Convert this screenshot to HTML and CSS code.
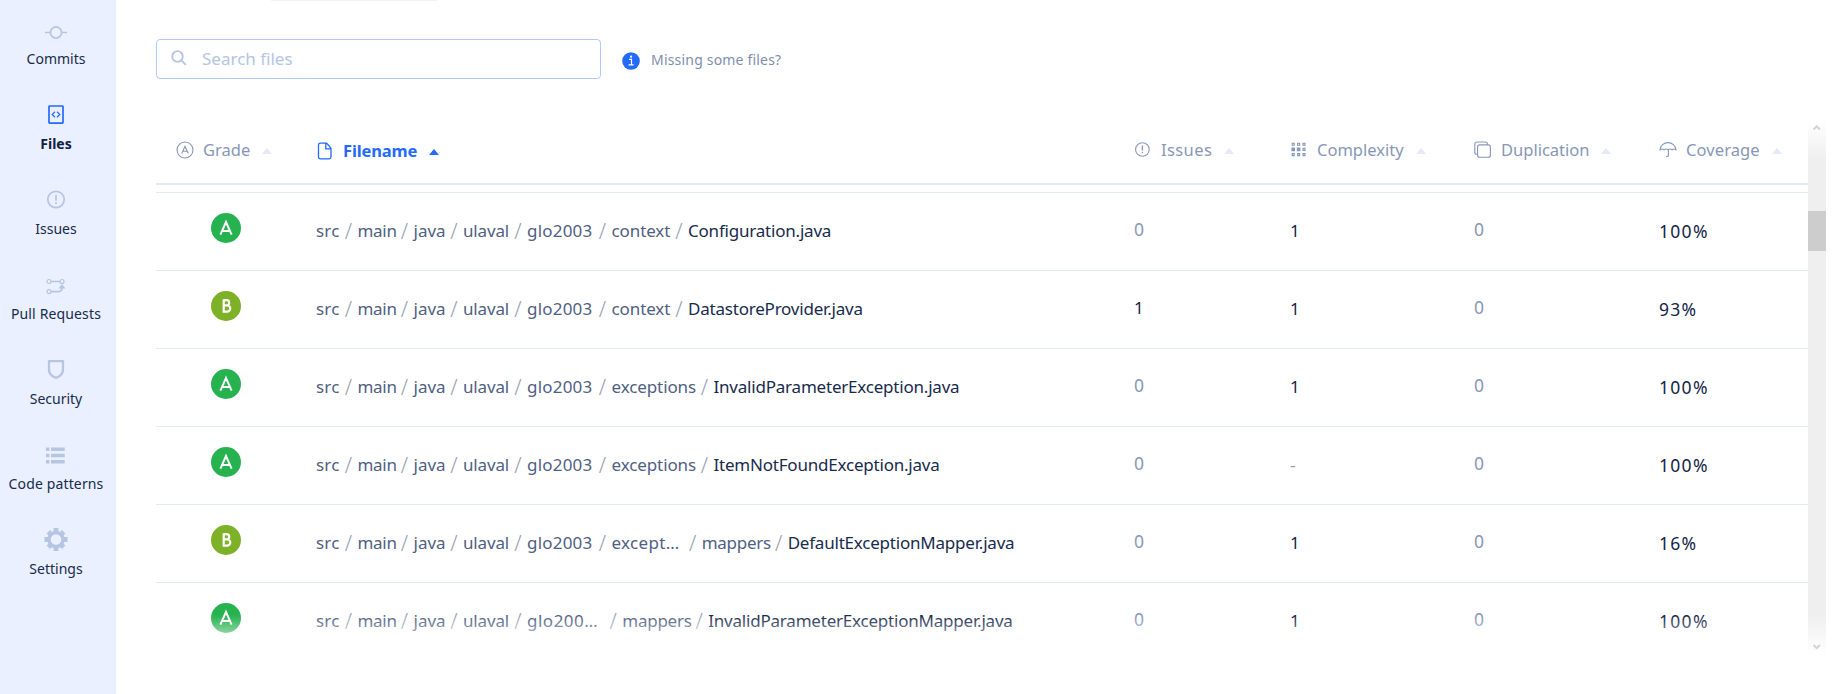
FILE: index.html
```html
<!DOCTYPE html>
<html lang="en">
<head>
<meta charset="utf-8">
<title>Files</title>
<link rel="stylesheet" href="styles.css">
</head>
<body>
<svg class="defs" aria-hidden="true">
  <symbol id="grade-a" viewBox="0 0 30 30"><circle cx="15" cy="15" r="15" fill="#26b24f"/><path d="M9.400 21.600 15 9l5.600 12.600M11.300 17.900h7.400" fill="none" stroke="#fff" stroke-width="2"/></symbol>
  <symbol id="grade-b" viewBox="0 0 30 30"><circle cx="15" cy="15" r="15" fill="#7db128"/><path d="M12.700 9.200h2.900a2.500 2.500 0 0 1 0 5.200h-2.900M12.700 14.400h3.400a3 3 0 0 1 0 6.300h-3.400zM12.700 8.200v13.500" fill="none" stroke="#fff" stroke-width="2.200"/></symbol>
</svg>
<div class="app">
  <nav class="sidebar">
    <a class="nav-item"><svg viewBox="0 0 32 32"><circle cx="16" cy="16.500" r="5.600"/><path d="M5 16.500h5.400M21.600 16.500H27"/></svg><span>Commits</span></a>
    <a class="nav-item active"><svg viewBox="0 0 32 32"><rect x="9" y="5" width="14" height="17.200" rx=".6"/><path d="m15 10.800-2.800 2.700 2.800 2.700M17 10.800l2.800 2.700-2.800 2.700" stroke-width="1.200"/></svg><span>Files</span></a>
    <a class="nav-item"><svg viewBox="0 0 32 32"><circle cx="16" cy="13.500" r="8.200"/><path d="M16 8.800v6M16 16.200v1.800"/></svg><span>Issues</span></a>
    <a class="nav-item wide"><svg viewBox="0 0 32 32"><path d="M11 10.500h9M11 20.600h7.500q3.500 0 3.500-3.500"/><g stroke-width="1.200"><circle cx="9" cy="10.500" r="2"/><circle cx="22" cy="10.500" r="2"/><circle cx="9" cy="20.600" r="2"/></g><path class="solid" d="m22 13 3.500 4.600h-7z"/></svg><span>Pull Requests</span></a>
    <a class="nav-item"><svg viewBox="0 0 32 32"><path d="M9 5.200h14v8.300c0 4-2.500 6.800-7 8.400-4.500-1.600-7-4.400-7-8.400z" stroke-width="2.300" stroke-linejoin="round"/></svg><span>Security</span></a>
    <a class="nav-item wide"><svg viewBox="0 0 32 32"><path class="solid" d="M6 6.500h3.400v3.600H6zM11 6.500h13.700v3.600H11zM6 12.700h3.400v3.600H6zM11 12.700h13.700v3.600H11zM6 18.900h3.400v3.600H6zM11 18.900h13.700v3.600H11z"/></svg><span>Code patterns</span></a>
    <a class="nav-item"><svg viewBox="0 0 32 32"><circle cx="16" cy="13.500" r="7" stroke-width="3.400"/><g stroke-width="4.800"><path d="M16 2v4.500M16 20.500V25M4.500 13.500H9M23 13.500h4.500M8.300 5.800l2.800 2.800M20.900 18.400l2.800 2.800M23.700 5.800l-2.800 2.800M11.100 18.400l-2.800 2.800"/></g></svg><span>Settings</span></a>
  </nav>
  <main class="content">
    <div class="tab-edge"></div>
    <div class="toolbar">
      <div class="search"><svg viewBox="0 0 16 16"><circle cx="6.500" cy="6.500" r="5.300"/><path d="m10.400 10.400 4.400 4.400"/></svg><span>Search files</span></div>
      <div class="missing"><svg viewBox="0 0 18 18"><circle cx="9" cy="9" r="8.800" fill="#246bfd"/><path d="M7 7.300h2.500v5.400M6.600 12.900h5" fill="none" stroke="#fff" stroke-width="1.200"/><circle cx="9.100" cy="4.700" r="1.100" fill="#fff"/></svg><span>Missing some files?</span></div>
    </div>
    <div class="panel">
      <div class="table">
        <div class="grid head">
          <div class="th th-grade"><svg viewBox="0 0 18 18"><circle cx="9" cy="9" r="8"/><path d="M5.700 12.600 9 5.400l3.300 7.200M6.900 10.300h4.200"/></svg><span>Grade</span><i class="sort"></i></div>
          <div class="th th-file"><svg viewBox="0 0 18 18"><path d="M10.600 1.200H4.200q-1.700 0-1.700 1.700v12.200q0 1.700 1.700 1.700h9.100q1.700 0 1.700-1.700V6.300zM9.800 1.200v5.700H15" stroke-width="1.300"/></svg><span>Filename</span><i class="sort"></i></div>
          <div class="th th-issues"><svg viewBox="0 0 18 18"><circle cx="8.400" cy="8.500" r="6.800"/><path d="M8.400 4.600v5M8.400 10.800v1.500" stroke-width="1.400"/></svg><span>Issues</span><i class="sort"></i></div>
          <div class="th th-complex"><svg viewBox="0 0 18 18"><path d="M2.200 2.200h2v2h-2zM7.600 2.200h2v2h-2zM13 2.200h2v2h-2zM2.200 12.600h2v2h-2zM7.600 12.600h2v2h-2zM13 7.400h2v2h-2zM13 12.600h2v2h-2z"/><path d="M2.200 7.400h2v2h-2zM7.600 7.400h2v2h-2z" fill="#8797ba" stroke-width="1.600"/></svg><span>Complexity</span><i class="sort"></i></div>
          <div class="th th-dup"><svg viewBox="0 0 18 18"><rect x="3.600" y="3.900" width="12.800" height="12.300" rx="2"/><path d="M3.600 13.200H2.800Q.8 13.200.8 11.200V3q0-2 2-2h8.600q2 0 2 2v.900"/></svg><span>Duplication</span><i class="sort"></i></div>
          <div class="th th-cov"><svg viewBox="0 0 18 18"><path d="M1 8.700C1.500 4.500 4.800 1.600 9 1.600s7.500 2.900 8 7.100q-2-1.500-4 0-2-1.500-4 0-2-1.500-4 0-2-1.500-4 0zM9.400 8.500v5.700q0 1.300-2.400 1.300"/></svg><span>Coverage</span><i class="sort"></i></div>
        </div>
        <div class="grid row">
          <svg class="badge"><use href="#grade-a"/></svg>
          <div class="path"><span class="src">src</span><b>/</b><span class="main">main</span><b>/</b><span class="java">java</span><b>/</b><span class="ulaval">ulaval</span><b>/</b><span class="glo">glo2003</span><b>/</b><span class="context">context</span><b>/</b><span class="file">Configuration.java</span></div>
          <div class="num zero">0</div><div class="num">1</div><div class="num zero">0</div><div class="num pct">100%</div>
        </div>
        <div class="grid row">
          <svg class="badge"><use href="#grade-b"/></svg>
          <div class="path"><span class="src">src</span><b>/</b><span class="main">main</span><b>/</b><span class="java">java</span><b>/</b><span class="ulaval">ulaval</span><b>/</b><span class="glo">glo2003</span><b>/</b><span class="context">context</span><b>/</b><span class="file">DatastoreProvider.java</span></div>
          <div class="num raised">1</div><div class="num">1</div><div class="num zero">0</div><div class="num pct">93%</div>
        </div>
        <div class="grid row">
          <svg class="badge"><use href="#grade-a"/></svg>
          <div class="path"><span class="src">src</span><b>/</b><span class="main">main</span><b>/</b><span class="java">java</span><b>/</b><span class="ulaval">ulaval</span><b>/</b><span class="glo">glo2003</span><b>/</b><span class="exceptions">exceptions</span><b>/</b><span class="file">InvalidParameterException.java</span></div>
          <div class="num zero">0</div><div class="num">1</div><div class="num zero">0</div><div class="num pct">100%</div>
        </div>
        <div class="grid row">
          <svg class="badge"><use href="#grade-a"/></svg>
          <div class="path"><span class="src">src</span><b>/</b><span class="main">main</span><b>/</b><span class="java">java</span><b>/</b><span class="ulaval">ulaval</span><b>/</b><span class="glo">glo2003</span><b>/</b><span class="exceptions">exceptions</span><b>/</b><span class="file">ItemNotFoundException.java</span></div>
          <div class="num zero">0</div><div class="num dash">-</div><div class="num zero">0</div><div class="num pct">100%</div>
        </div>
        <div class="grid row">
          <svg class="badge"><use href="#grade-b"/></svg>
          <div class="path"><span class="src">src</span><b>/</b><span class="main">main</span><b>/</b><span class="java">java</span><b>/</b><span class="ulaval">ulaval</span><b>/</b><span class="glo">glo2003</span><b>/</b><span class="cut">except…</span><b>/</b><span class="mappers">mappers</span><b>/</b><span class="file">DefaultExceptionMapper.java</span></div>
          <div class="num zero">0</div><div class="num">1</div><div class="num zero">0</div><div class="num pct">16%</div>
        </div>
        <div class="grid row">
          <svg class="badge"><use href="#grade-a"/></svg>
          <div class="path"><span class="src">src</span><b>/</b><span class="main">main</span><b>/</b><span class="java">java</span><b>/</b><span class="ulaval">ulaval</span><b>/</b><span class="cut digits">glo200…</span><b>/</b><span class="mappers">mappers</span><b>/</b><span class="file">InvalidParameterExceptionMapper.java</span></div>
          <div class="num zero">0</div><div class="num">1</div><div class="num zero">0</div><div class="num pct">100%</div>
        </div>
      </div>
      <div class="scrollbar">
        <svg viewBox="0 0 18 18"><path d="m5.500 9.500 3.200-3.200 3.200 3.200"/></svg>
        <div class="thumb"></div>
        <svg class="down" viewBox="0 0 18 18"><path d="m5.500 8 3.200 3.200L11.900 8"/></svg>
      </div>
      <div class="fade"></div>
    </div>
  </main>
</div>
</body>
</html>
```

FILE: styles.css
```css
* { box-sizing: border-box; }
body { margin: 0; background: #fff; font-family: "Noto Sans", sans-serif; color: #172b4d; }
.defs { display: none; }
.app { display: flex; height: 694px; overflow: hidden; }

.sidebar { width: 116px; flex: none; padding: 16px 4px 0 0; background: #eaf0ff; }
.nav-item { display: flex; flex-direction: column; align-items: center; height: 85px; font-size: 14px; line-height: 20px; white-space: nowrap; }
.nav-item.wide { letter-spacing: .14px; }
.nav-item svg { width: 32px; height: 32px; margin-bottom: 1px; fill: none; stroke: #b5c5e2; stroke-width: 1.7; }
.nav-item .solid { fill: #b5c5e2; stroke: none; }
.nav-item.active { font-weight: 700; color: #0f2148; }
.nav-item.active svg { stroke: #246bfd; }

.content { flex: 1; min-width: 0; padding: 0 13px 0 40px; }
.tab-edge { width: 166px; height: 1px; margin-left: 115px; background: #f0f2f8; }
.toolbar { display: flex; align-items: center; margin-top: 38px; height: 40px; }
.search { display: flex; align-items: center; gap: 15px; width: 445px; height: 40px; padding: 0 0 2px 14px; border: 1px solid #b3c9fb; border-radius: 4px; color: #b5c5e2; font-size: 17px; }
.search svg { width: 16px; height: 16px; fill: none; stroke: #b5c5e2; stroke-width: 1.8; }
.missing { display: flex; align-items: center; gap: 11px; margin-left: 21px; padding-top: 3px; color: #7f8fae; font-size: 14px; letter-spacing: .19px; }
.missing span { position: relative; top: -1px; }
.missing svg { width: 18px; height: 18px; }

.panel { position: relative; display: flex; height: 535px; margin-top: 41px; }
.table { width: 1652px; height: 535px; overflow: hidden; }
.grid { display: grid; grid-template-columns: 158px 820px 156px 184px 185px 1fr; }
.head { height: 65px; border-bottom: 2px solid #e3eaf6; }
.th { display: flex; align-items: center; height: 60px; color: #8797ba; font-size: 16.500px; white-space: nowrap; }
.th svg { width: 18px; height: 18px; flex: none; fill: none; stroke: #8797ba; stroke-width: 1.1; }
.th span { margin-left: 9px; padding-bottom: 2px; }
.th-grade { padding-left: 20px; }
.th-file { padding: 1px 0 0 2px; font-weight: 700; color: #246bfd; }
.th-file span { padding: 0; letter-spacing: -.15px; }
.th-issues span { letter-spacing: .4px; }
.th-cov span { letter-spacing: .1px; }
.th-file svg { stroke: #246bfd; }
.sort { margin: 2px 0 0 12px; border: 5px solid transparent; border-top: 0; border-bottom: 6px solid #e3eaf6; }
.th-file .sort { border-bottom-color: #246bfd; }

.row { height: 78px; border-top: 1px solid #e3eaf6; font-size: 17px; line-height: 24px; }
.row:nth-child(2) { margin-top: 7px; }
.badge { width: 30px; height: 30px; margin: 20px 0 0 55px; }
.path { display: flex; margin-top: 26px; padding-left: 2px; color: #505f83; white-space: pre; }
.path b { width: 18px; font-size: 21px; font-weight: 300; color: #98a2b6; text-align: center; }
.src { width: 23.500px; letter-spacing: .2px; }
.main { width: 38px; letter-spacing: -.3px; }
.java { width: 31.500px; }
.ulaval { width: 46px; letter-spacing: -.15px; }
.glo { width: 66.500px; letter-spacing: .2px; }
.context { width: 58.500px; letter-spacing: -.1px; }
.exceptions { width: 84px; letter-spacing: -.1px; }
.mappers { width: 68px; letter-spacing: -.25px; }
.path .file { color: #172b4d; letter-spacing: -.21px; }
.path .cut { margin-right: 4px; letter-spacing: .35px; }
.path .digits { margin-right: 6px; letter-spacing: .5px; }
.num { margin-top: 26px; color: #14244a; }
.pct { font-size: 17.500px; letter-spacing: 1.300px; }
.zero { margin-top: 24px; color: #8797ba; font-size: 17.500px; }
.raised { margin-top: 25px; }
.dash { color: #8797ba; }

.scrollbar { position: relative; width: 18px; background: #efefef; display: flex; flex-direction: column; }
.scrollbar svg { position: relative; z-index: 2; width: 18px; height: 18px; fill: none; stroke: #d2d2d2; stroke-width: 2; }
.thumb { height: 40px; margin-top: 73px; background: #cdcdcd; }
.scrollbar .down { margin-top: auto; }
.scrollbar::before { content: ""; position: absolute; inset: 0 0 auto; height: 40px; background: linear-gradient(#fff, rgba(255,255,255,0)); }
.fade { position: absolute; left: 0; right: 0; bottom: 0; height: 40px; background: linear-gradient(rgba(255,255,255,0), #fff); }
```
